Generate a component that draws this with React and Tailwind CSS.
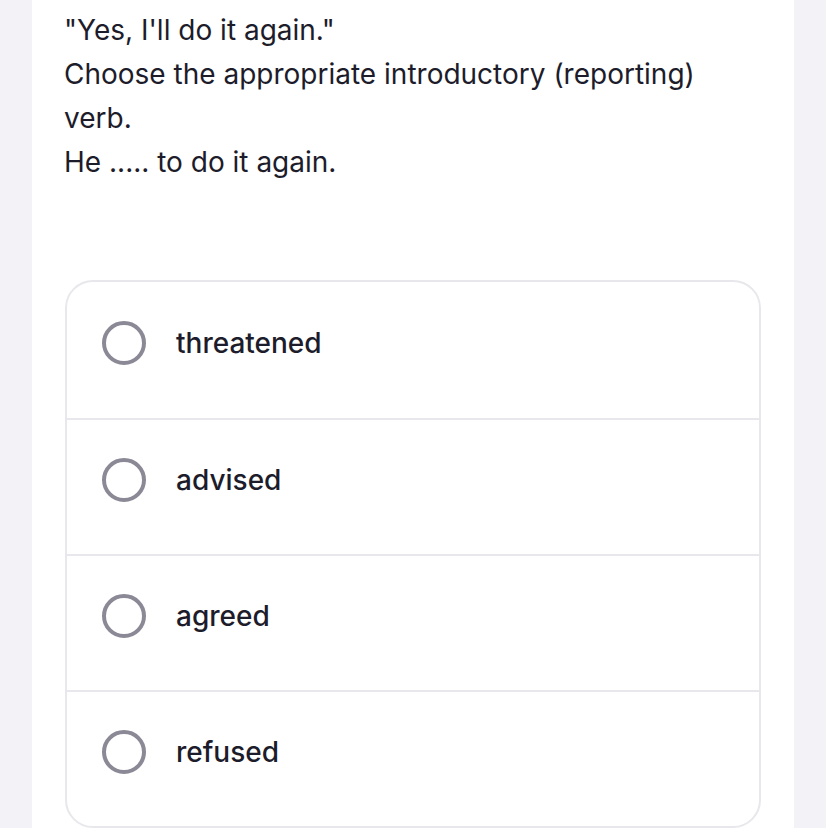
const OPTIONS = ["threatened", "advised", "agreed", "refused"];

function Radio() {
  return (
    <span className="block w-[44px] h-[44px] rounded-full border-[4px] border-[#8b8996] shrink-0" />
  );
}

export default function App() {
  return (
    <div className="min-h-screen bg-[#f2f2f7] flex justify-center font-['Inter',sans-serif]">
      <div className="w-[762px] bg-white px-[32px] pt-[8px] pb-[2px]">
        <div className="text-[28px] leading-[44px] text-[#1d1c2b]">
          <p>"Yes, I'll do it again."</p>
          <p>Choose the appropriate introductory (reporting) verb.</p>
          <p>He ..... to do it again.</p>
        </div>

        <div className="mt-[96px] mx-[1px] border-2 border-[#e8e8ec] rounded-[28px] overflow-hidden">
          {OPTIONS.map((opt, i) => (
            <div
              key={opt}
              className={`h-[136px] flex items-center gap-[30px] pl-[35px] pb-[14px] ${i > 0 ? "border-t-2 border-[#e8e8ec]" : ""}`}
            >
              <Radio />
              <span className="text-[28px] font-medium text-[#1d1c2b]">{opt}</span>
            </div>
          ))}
        </div>
      </div>
    </div>
  );
}
